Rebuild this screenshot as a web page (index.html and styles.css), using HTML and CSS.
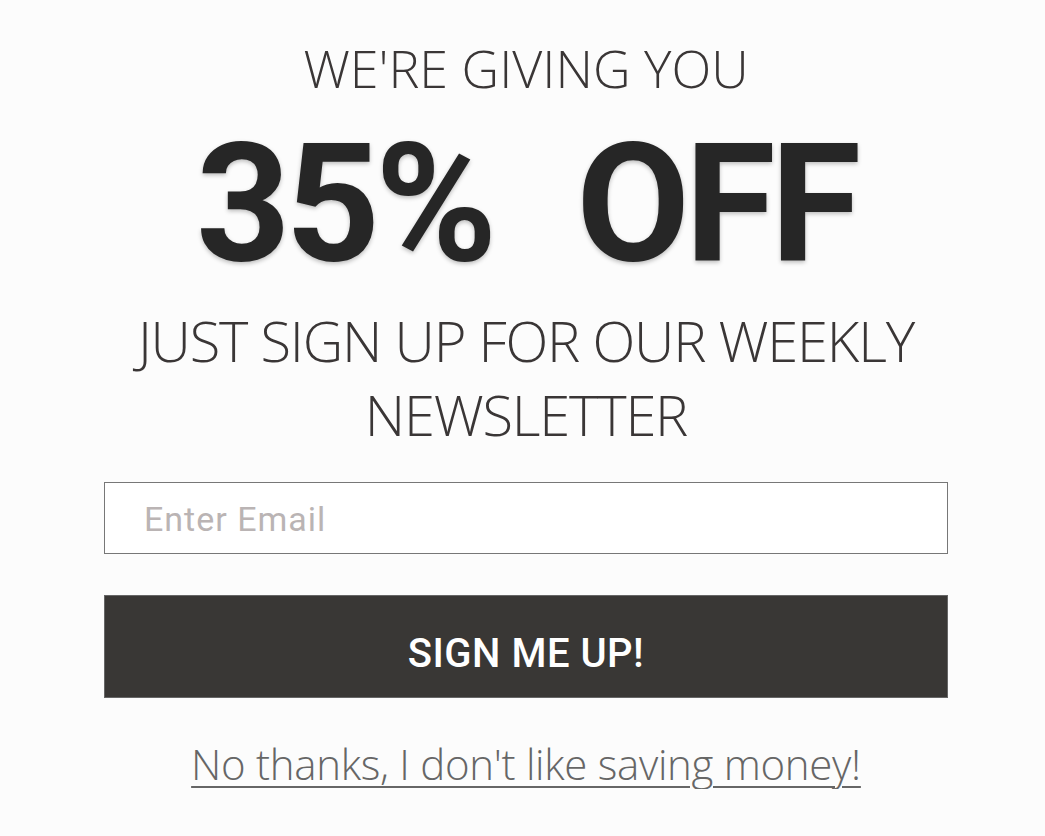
FILE: index.html
```html
<!DOCTYPE html>
<html lang="en">
<head>
<meta charset="utf-8">
<title>Newsletter offer</title>
<link rel="stylesheet" href="styles.css">
</head>
<body>
<main class="offer">
  <p class="intro">WE'RE GIVING YOU</p>
  <h1 class="deal">35%&nbsp;&nbsp;OFF</h1>
  <p class="pitch">JUST SIGN UP FOR OUR WEEKLY NEWSLETTER</p>
  <form class="signup">
    <input class="email" type="email" placeholder="Enter Email">
    <button class="submit" type="button">SIGN ME UP!</button>
  </form>
  <a class="decline" href="#">No thanks, I don't like saving money!</a>
</main>
</body>
</html>
```

FILE: styles.css
```css
html, body {
  margin: 0;
  padding: 0;
  background: #fcfcfc;
}

.offer {
  width: 844px;
  margin-left: 104px;
  padding-top: 38px;
  display: flex;
  flex-direction: column;
  align-items: center;
  text-align: center;
}

.intro {
  margin: 0;
  font-family: "Open Sans", sans-serif;
  font-weight: 300;
  font-size: 52px;
  line-height: 60px;
  color: #3a3636;
}

.deal {
  margin: 41px 0 0;
  font-family: Roboto, sans-serif;
  font-weight: 700;
  font-size: 165px;
  line-height: 130px;
  letter-spacing: -5px;
  word-spacing: 6px;
  color: #262626;
  text-shadow: 0 2px 4px rgba(0, 0, 0, 0.25);
}

.pitch {
  margin: 34px 0 0;
  width: 100%;
  font-family: "Open Sans", sans-serif;
  font-weight: 300;
  font-size: 56px;
  line-height: 74px;
  letter-spacing: -1.2px;
  color: #3a3636;
}

.signup {
  margin-top: 31px;
  width: 100%;
  display: flex;
  flex-direction: column;
  gap: 41px;
}

.email {
  box-sizing: border-box;
  width: 100%;
  height: 72px;
  margin: 0;
  padding: 1px 0 0 39px;
  border: 1px solid #777;
  border-radius: 0;
  background: #fff;
  font-family: Roboto, sans-serif;
  font-weight: 400;
  font-size: 34px;
  letter-spacing: 1px;
  color: #333;
  outline: none;
}

.email::placeholder {
  color: #bab4b4;
}

.submit {
  box-sizing: border-box;
  width: 100%;
  height: 103px;
  margin: 0;
  padding: 14px 0 0;
  border: 1px solid #666;
  border-radius: 0;
  background: #393735;
  color: #fff;
  font-family: Roboto, sans-serif;
  font-weight: 500;
  font-size: 40px;
  letter-spacing: 0.5px;
  cursor: pointer;
}

.decline {
  margin-top: 41px;
  font-family: "Open Sans", sans-serif;
  font-weight: 300;
  font-size: 42px;
  line-height: 50px;
  letter-spacing: -0.3px;
  color: #666;
  text-decoration: underline;
  text-decoration-thickness: 2px;
  text-underline-offset: 6px;
}
```
